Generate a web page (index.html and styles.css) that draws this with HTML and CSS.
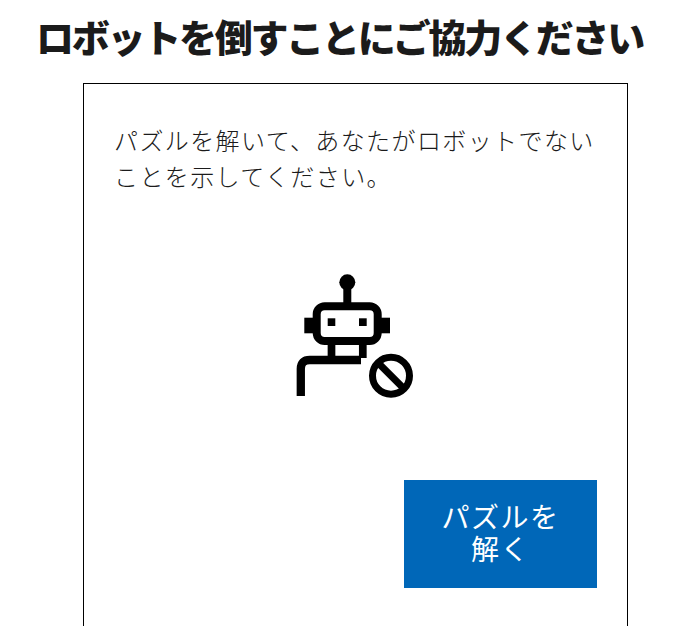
FILE: index.html
```html
<!DOCTYPE html>
<html lang="ja">
<head>
<meta charset="utf-8">
<title>ロボットを倒すことにご協力ください</title>
<link rel="stylesheet" href="styles.css">
</head>
<body>
<h1 class="title">ロボットを倒すことにご協力ください</h1>
<main class="card">
  <p class="lead">パズルを解いて、あなたがロボットでないことを示してください。</p>
  <div class="figure">
    <svg class="robot" viewBox="295 274 120 124" width="120" height="124" aria-hidden="true">
      <circle cx="347.3" cy="282.3" r="8" fill="#000"/>
      <path d="M347.3 282V303" stroke="#000" stroke-width="8" fill="none"/>
      <rect x="316.7" y="306.3" width="61" height="34.7" rx="8" stroke="#000" stroke-width="8" fill="none"/>
      <rect x="304.3" y="317.7" width="9" height="15.6" fill="#000"/>
      <rect x="381" y="317.7" width="9" height="15.6" fill="#000"/>
      <rect x="327.7" y="318.3" width="7.6" height="7.7" fill="#000"/>
      <rect x="359" y="318.3" width="7.7" height="7.7" fill="#000"/>
      <path d="M331.5 344V360M362.8 344V358" stroke="#000" stroke-width="7.7" fill="none"/>
      <path d="M300.8 396V369Q300.8 360 309.8 360H361" stroke="#000" stroke-width="8.3" fill="none"/>
      <circle cx="391" cy="375.7" r="18.5" stroke="#000" stroke-width="7" fill="#fff"/>
      <path d="M378 362.7L404 388.7" stroke="#000" stroke-width="7" fill="none"/>
    </svg>
  </div>
  <div class="actions">
    <button class="solve" type="button">パズルを<br>解く</button>
  </div>
</main>
</body>
</html>
```

FILE: styles.css
```css
html, body {
  margin: 0;
  padding: 0;
  background: #fff;
}
body {
  width: 693px;
  height: 626px;
  overflow: hidden;
  font-family: "Noto Sans CJK JP", "Noto Sans", sans-serif;
}
.title {
  margin: 0;
  width: 679px;
  padding-top: 11px;
  height: 69px;
  box-sizing: border-box;
  font-size: 38px;
  line-height: 50px;
  font-weight: 900;
  letter-spacing: -2.25px;
  color: #1b1b1b;
  text-align: center;
  white-space: nowrap;
}
.card {
  box-sizing: border-box;
  width: 545px;
  height: 543px;
  margin: 14px 0 0 83px;
  padding: 38px 30px 0;
  border: 1px solid #000;
  border-bottom: 0;
  display: flex;
  flex-direction: column;
}
.lead {
  margin: 0;
  font-size: 24px;
  line-height: 36px;
  font-weight: 300;
  letter-spacing: 1.4px;
  color: #1b1b1b;
}
.figure {
  margin-top: 80px;
  padding-right: 2px;
  display: flex;
  justify-content: center;
}
.robot {
  display: block;
}
.actions {
  margin-top: 82px;
  display: flex;
  justify-content: flex-end;
}
.solve {
  width: 193px;
  height: 108px;
  padding: 0 20px 4px;
  border: 0;
  background: #0067b8;
  color: #fff;
  font-family: inherit;
  font-size: 28px;
  line-height: 32px;
  letter-spacing: 1.5px;
}
```
